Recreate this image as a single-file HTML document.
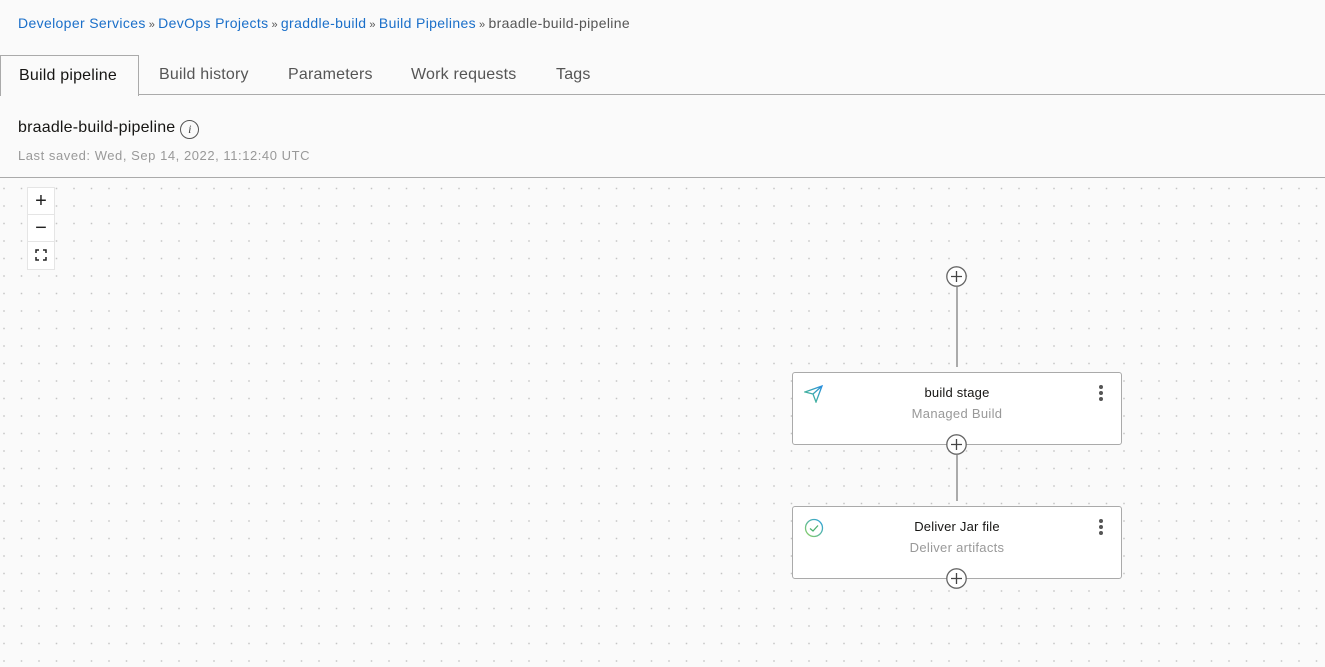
<!DOCTYPE html>
<html><head><meta charset="utf-8"><style>
*{margin:0;padding:0;box-sizing:border-box}
body{width:1325px;height:667px;overflow:hidden;background:#fafafa;font-family:"Liberation Sans",sans-serif;position:relative;color:#222}
.bc{position:absolute;left:18px;top:15px;font-size:14px;color:#555;letter-spacing:0.35px}
.bc a{color:#1a6fc9;text-decoration:none}
.bc .s{font-size:11px;color:#555;margin:0 3px}
.tabs{position:absolute;left:0;top:55px;width:1325px;height:40px;border-bottom:1px solid #aaa}
.tab{position:absolute;top:11px;font-size:16px;color:#555;letter-spacing:0.2px}
.act{position:absolute;left:0;top:0;width:139px;height:41px;border:1px solid #aaa;border-bottom:none;background:#fafafa;font-size:16px;color:#161513;padding:11px 0 0 18px;letter-spacing:0.2px}
.title{position:absolute;left:18px;top:119px;font-size:16px;color:#161513;letter-spacing:0.2px}
.info{display:inline-block;width:19px;height:19px;border:1px solid #555;border-radius:50%;font:italic 12px "Liberation Serif",serif;text-align:center;line-height:17px;vertical-align:-1px;margin-left:5px;color:#444}
.saved{position:absolute;left:18px;top:148px;font-size:13px;color:#999;letter-spacing:0.55px}
.canvas{position:absolute;left:0;top:177px;width:1325px;height:490px;border-top:1px solid #aaa;
background-image:radial-gradient(circle,#c4c4c4 0.7px,transparent 1px);background-size:17.5px 17.5px;background-position:-4.75px 1.75px}
.zoom{position:absolute;left:27px;top:187px;width:28px;background:#fff;border:1px solid #e5e5e5}
.zoom div{height:27px;border-bottom:1px solid #e5e5e5;text-align:center;font-size:20px;line-height:26px;color:#222}
.zoom div:last-child{border:none}
.card{position:absolute;left:792px;width:330px;height:73px;background:#fff;border:1px solid #aaa;border-radius:3px;text-align:center}
.card .n{font-size:13px;color:#161513;margin-top:12px;letter-spacing:0.2px}
.card .t{font-size:13px;color:#999;margin-top:6px;letter-spacing:0.3px}
.dots{position:absolute;right:18px;top:12px;width:4px}
.dots i{display:block;width:4px;height:4px;border-radius:50%;background:#555;margin-bottom:2px}
.plus{position:absolute;width:21px;height:21px}
.line{position:absolute;left:956px;width:2px;background:#aaa}
</style></head><body>
<div class="bc"><a>Developer Services</a><span class="s">»</span><a>DevOps Projects</a><span class="s">»</span><a>graddle-build</a><span class="s">»</span><a>Build Pipelines</a><span class="s">»</span>braadle-build-pipeline</div>
<div class="tabs">
<div class="act">Build pipeline</div>
<div class="tab" style="left:159px">Build history</div>
<div class="tab" style="left:288px">Parameters</div>
<div class="tab" style="left:411px">Work requests</div>
<div class="tab" style="left:556px">Tags</div>
</div>
<div class="title">braadle-build-pipeline<span class="info">i</span></div>
<div class="saved">Last saved: Wed, Sep 14, 2022, 11:12:40 UTC</div>
<div class="canvas"></div>
<div class="zoom"><div>+</div><div>−</div><div style="font-size:0"><svg width="12" height="12" viewBox="0 0 12 12" style="margin-top:7px" fill="none" stroke="#222" stroke-width="1.5"><path d="M1 4V1H4M8 1H11V4M11 8V11H8M4 11H1V8"/></svg></div></div>
<div class="line" style="top:287px;height:80px"></div>
<div class="line" style="top:455px;height:46px"></div>
<div class="card" style="top:372px">
<svg style="position:absolute;left:11px;top:12px" width="20" height="18" viewBox="0 0 20 18" fill="none" stroke-width="1.3"><defs><linearGradient id="g" x1="0" y1="1" x2="1" y2="0"><stop offset="0" stop-color="#4cc080"/><stop offset="1" stop-color="#2a8fe0"/></linearGradient></defs><path d="M1 7L18 1L12 17L9 9Z M9 9L18 1" stroke="url(#g)"/></svg>
<div class="n">build stage</div><div class="t">Managed Build</div>
<div class="dots"><i></i><i></i><i></i></div></div>
<div class="card" style="top:506px">
<svg style="position:absolute;left:11px;top:11px" width="20" height="20" viewBox="0 0 20 20" fill="none" stroke-width="1.3"><defs><linearGradient id="h" x1="0" y1="1" x2="1" y2="0"><stop offset="0" stop-color="#8cd060"/><stop offset="1" stop-color="#2a9fe0"/></linearGradient></defs><circle cx="10" cy="10" r="8.5" stroke="url(#h)"/><path d="M6 10.5L9 13L14 7.5" stroke="#4cb070"/></svg>
<div class="n">Deliver Jar file</div><div class="t">Deliver artifacts</div>
<div class="dots"><i></i><i></i><i></i></div></div>
<svg class="plus" style="left:946px;top:266px" viewBox="0 0 21 21"><circle cx="10.5" cy="10.5" r="9.7" fill="#fff" stroke="#666" stroke-width="1.3"/><path d="M10.5 5V16M5 10.5H16" stroke="#444" stroke-width="1.3"/></svg>
<svg class="plus" style="left:946px;top:434px" viewBox="0 0 21 21"><circle cx="10.5" cy="10.5" r="9.7" fill="#fff" stroke="#666" stroke-width="1.3"/><path d="M10.5 5V16M5 10.5H16" stroke="#444" stroke-width="1.3"/></svg>
<svg class="plus" style="left:946px;top:568px" viewBox="0 0 21 21"><circle cx="10.5" cy="10.5" r="9.7" fill="#fff" stroke="#666" stroke-width="1.3"/><path d="M10.5 5V16M5 10.5H16" stroke="#444" stroke-width="1.3"/></svg>
</body></html>
